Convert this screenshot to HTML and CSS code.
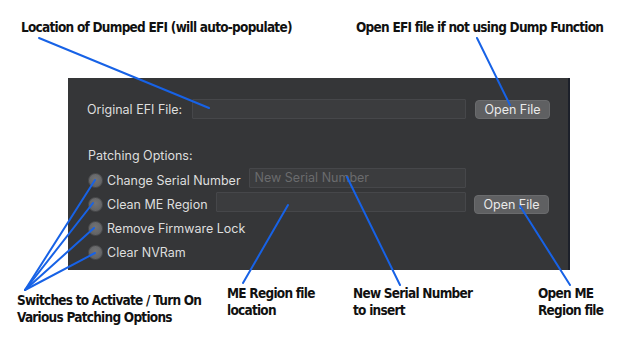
FILE: index.html
```html
<!DOCTYPE html>
<html lang="en">
<head>
  <meta charset="UTF-8" />
  <meta name="viewport" content="width=device-width, initial-scale=1.0"/>
  <title>EFI Patcher - Annotated</title>
  <link rel="stylesheet" href="styles.css">
</head>
<body>
  <div class="figure">
    <div class="notes-top">
      <div class="note note-efi">Location of Dumped EFI (will auto-populate)</div>
      <div class="note">Open EFI file if not using Dump Function</div>
    </div>

    <div class="panel">
      <div class="file-row">
        <label class="file-label" for="efiFile">Original EFI File:</label>
        <input type="text" id="efiFile" class="field">
        <button type="button" class="btn">Open File</button>
      </div>

      <div class="section-title">Patching Options:</div>

      <div class="option-row">
        <span class="radio"></span>
        <span class="option-label">Change Serial Number</span>
        <input type="text" class="field field-inline" placeholder="New Serial Number">
        <span class="btn-spacer"></span>
      </div>
      <div class="option-row">
        <span class="radio"></span>
        <span class="option-label">Clean ME Region</span>
        <input type="text" class="field field-inline">
        <button type="button" class="btn">Open File</button>
      </div>
      <div class="option-row">
        <span class="radio"></span>
        <span class="option-label">Remove Firmware Lock</span>
      </div>
      <div class="option-row">
        <span class="radio"></span>
        <span class="option-label">Clear NVRam</span>
      </div>
    </div>

    <div class="notes-bottom">
      <div class="note note-switches">Switches to Activate / Turn On<br>Various Patching Options</div>
      <div class="note">ME Region file<br>location</div>
      <div class="note">New Serial Number<br>to insert</div>
      <div class="note">Open ME<br>Region file</div>
    </div>

    <svg class="pointers" width="640" height="345" viewBox="0 0 640 345">
      <line x1="39" y1="38" x2="209" y2="108"/>
      <line x1="477" y1="38" x2="510" y2="105"/>
      <line x1="25" y1="290" x2="95" y2="180"/>
      <line x1="25" y1="290" x2="93" y2="203"/>
      <line x1="25" y1="290" x2="94" y2="228"/>
      <line x1="25" y1="290" x2="95" y2="253"/>
      <line x1="243" y1="283" x2="288" y2="205"/>
      <line x1="400" y1="285" x2="347" y2="177"/>
      <line x1="570" y1="285" x2="520" y2="206"/>
    </svg>
  </div>
</body>
</html>
```

FILE: styles.css
```css
*, *::before, *::after {
  box-sizing: border-box;
}

html, body {
  margin: 0;
  padding: 0;
  background: #ffffff;
}

.figure {
  position: relative;
  width: 640px;
  height: 345px;
  overflow: hidden;
}

.note {
  font-family: "DejaVu Sans Condensed", "DejaVu Sans", sans-serif;
  font-stretch: condensed;
  font-weight: bold;
  font-size: 13.5px;
  letter-spacing: -0.75px;
  line-height: 17px;
  color: #111;
  white-space: nowrap;
}

.notes-top {
  display: flex;
  height: 78px;
  padding: 19px 0 0 21px;
}

.note-efi {
  flex: 0 0 335px;
}

.panel {
  margin-left: 68px;
  width: 502px;
  height: 192px;
  background: #353638;
  border-right: 2px solid #1c202a;
  padding: 21px 0 0 19px;
  font-family: "Inter", "Noto Sans", sans-serif;
  font-size: 12.5px;
  color: #dedede;
}

.file-row {
  display: flex;
  align-items: center;
  width: 463px;
  height: 20px;
}

.file-label {
  flex: 0 0 105px;
}

.field {
  flex: 1;
  height: 20px;
  background: #3b3c3e;
  border: 1px solid #46474a;
  border-radius: 1px;
  padding: 0 5px;
  font-family: inherit;
  font-size: 12.5px;
  color: #dedede;
  outline: none;
}

.field::placeholder {
  color: #6a6b6d;
}

.field-inline {
  margin: 0 0 5px 8px;
}

.btn {
  flex: 0 0 75px;
  height: 19px;
  margin-left: 8px;
  background: #5f6062;
  border: 1px solid #6a6b6d;
  border-radius: 4px;
  padding: 0;
  font-family: inherit;
  font-size: 12.5px;
  color: #eaeaea;
}

.file-row .btn {
  margin-left: 9px;
}

.btn-spacer {
  flex: 0 0 75px;
  margin-left: 8px;
}

.section-title {
  margin-top: 29px;
  height: 16px;
  line-height: 16px;
  padding-left: 1px;
}

.option-row {
  display: flex;
  align-items: center;
  width: 461px;
  height: 24px;
  margin-left: 1px;
}

.section-title + .option-row {
  margin-top: 4px;
}

.radio {
  flex: 0 0 15px;
  height: 15px;
  border-radius: 50%;
  background: radial-gradient(circle at 50% 40%, #727375, #5c5d5f);
  border: 1px solid #4a4b4d;
  margin-right: 4px;
}

.notes-bottom {
  display: grid;
  grid-template-columns: 210px 126px 185px 1fr;
  padding: 285px 0 0 17px;
  position: absolute;
  top: 0;
  left: 0;
  width: 640px;
}

.note-switches {
  margin-top: 7px;
}

.pointers {
  position: absolute;
  top: 0;
  left: 0;
  pointer-events: none;
}

.pointers line {
  stroke: #1762e6;
  stroke-width: 2;
  stroke-linecap: round;
}
```
